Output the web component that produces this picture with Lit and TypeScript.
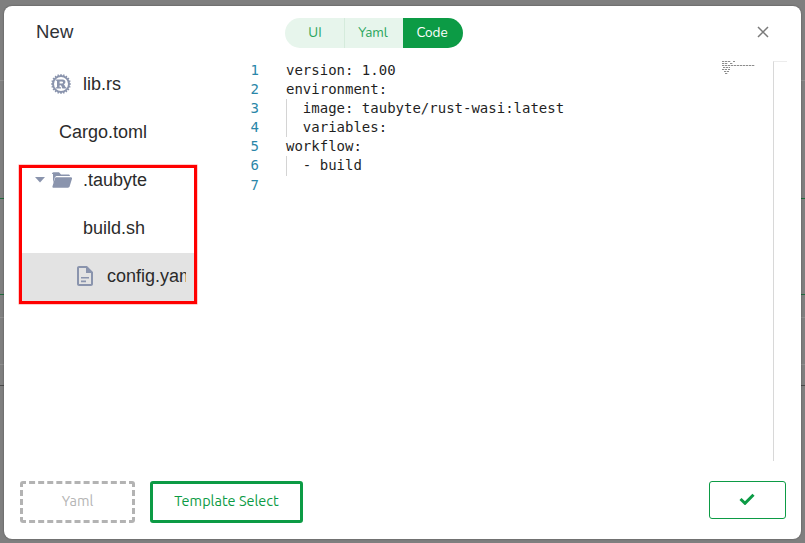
import { LitElement, html, css, svg } from "lit";
import { customElement } from "lit/decorators.js";

const CODE: [string, boolean][] = [
  ["version: 1.00", false],
  ["environment:", false],
  ["  image: taubyte/rust-wasi:latest", true],
  ["  variables:", true],
  ["workflow:", false],
  ["  - build", true],
  ["", false],
];

const BACKDROP: [number, string][] = [
  [80, "#8e8e8e"],
  [198, "#1f6b3c"],
  [294, "#1f6b3c"],
  [317, "#8e8e8e"],
  [364, "#8e8e8e"],
  [385, "#4a4a4a"],
];

@customElement("app-root")
export class AppRoot extends LitElement {
  static styles = css`
    :host { display: block; width: 805px; height: 543px; }
    * { box-sizing: border-box; }
    .page { position: relative; width: 805px; height: 543px; background: #7f7f7f; overflow: hidden; padding: 6px 4px 4px; }
    .backline { position: absolute; left: 0; right: 0; height: 1px; }
    .modal { position: relative; width: 797px; height: 533px; background: #fff; border-radius: 8px; display: flex; flex-direction: column; box-shadow: 0 0 2px rgba(0,0,0,.4); }
    .header { height: 47px; display: grid; grid-template-columns: 249px auto 1fr; align-items: center; padding: 7px 32px 0; flex: none; }
    .title { font: 18.5px "Liberation Sans", sans-serif; color: #2f3237; margin-bottom: 2px; letter-spacing: .15px; }
    .seg { display: flex; height: 30px; border-radius: 15px; overflow: hidden; font: 13.5px "Nunito", "Open Sans", sans-serif; }
    .seg span { display: flex; align-items: center; justify-content: center; background: #e7f5ec; color: #2ba55c; padding-bottom: 2px; }
    .seg .ui { width: 60px; border-right: 1px solid #d5ebdc; padding-left: 1px; }
    .seg .yaml { width: 58px; padding-right: 2px; }
    .seg .code { width: 60px; background: #0c9b45; color: #fff; padding-right: 2px; }
    .close { justify-self: end; display: flex; margin-bottom: 2px; }
    .body { flex: 1; display: flex; min-height: 0; }
    .tree { width: 193px; padding: 7px 0 0 16px; flex: none; font: 18px "Liberation Sans", sans-serif; color: #2b2b2b; }
    .row { height: 48px; display: flex; align-items: center; white-space: nowrap; overflow: hidden; }
    .row.tall { height: 49px; padding-bottom: 1px; }
    .row.sel { background: #e3e3e3; width: 174px; padding-right: 8px; padding-bottom: 2px; }
    .name { overflow: hidden; min-width: 0; }
    .l1 { padding-left: 31px; }
    .l2 { padding-left: 39px; }
    .l3 { padding-left: 15px; }
    .l4 { padding-left: 63px; }
    .l5 { padding-left: 57px; }
    .ico { display: flex; flex: none; margin-right: 12px; }
    .caret { margin-right: 7px; flex: none; }
    .folder { margin-right: 11px; flex: none; }
    .doc { margin-right: 14px; flex: none; }
    .redbox { position: absolute; left: 15px; top: 159px; width: 178px; height: 139px; border: 3px solid #f00; box-shadow: 0 0 0 .5px rgba(255,0,0,.4); pointer-events: none; }
    .editor { flex: 1; position: relative; font: 14px/19.1px "DejaVu Sans Mono", monospace; color: #1f1f1f; padding-top: 8px; padding-left: 32px; }
    .line { display: flex; height: 19.1px; }
    .num { width: 30px; text-align: right; color: #2a86a8; margin-right: 27px; flex: none; }
    .txt { white-space: pre; position: relative; }
    .guide { position: absolute; left: 0; top: 0; bottom: 0; width: 1px; background: #d4d4d4; }
    .mini { position: absolute; left: 525px; top: 8px; }
    .track { position: absolute; left: 576px; top: 8px; bottom: 0; width: 14px; border-left: 1px solid #d8d8d8; border-top: 1px solid #ececec; }
    .footer { height: 78px; flex: none; display: flex; align-items: flex-start; padding: 20px 16px 0 16px; gap: 15px; }
    .btn { height: 42px; display: flex; align-items: center; justify-content: center; background: #fff; border-radius: 3px; padding-bottom: 4px; font: 14.5px "Ubuntu", "Noto Sans", sans-serif; }
    .ghost { width: 115px; border: 3px dashed #b3b3b3; color: #b5b5b5; }
    .tpl { width: 153px; border: 3px solid #0c9b45; color: #0c9b45; }
    .ok { width: 77px; height: 38px; border: 1px solid #0c9b45; margin-left: auto; margin-right: -1px; padding: 0 2px 3px 0; }
  `;

  rust() {
    const teeth = Array.from({ length: 20 }, (_, i) => svg`<rect x="9.3" y=".1" width="1.4" height="2" fill="#8a94ad" transform="rotate(${i * 18} 10 10)"></rect>`);
    return html`<svg width="20" height="20" viewBox="0 0 20 20">${teeth}
      <circle cx="10" cy="10" r="8" fill="none" stroke="#8a94ad" stroke-width="2"></circle>
      <path fill-rule="evenodd" d="M4.8 5.4H11.8C15 5.4 15.2 9.4 12.8 10.2C14 10.6 13.8 13.2 15.4 13.4V14.6H11.6C10.4 14 11.4 11.2 9 11.2H8.6V13.2H10V14.6H4.8V13.2H6V6.8H4.8ZM8.6 7.4V9.4H11C12.4 9.4 12.4 7.4 11 7.4Z" fill="#8a94ad"></path></svg>`;
  }

  render() {
    return html`<div class="page">
      ${BACKDROP.map(([y, c]) => html`<div class="backline" style="top:${y}px;background:${c}"></div>`)}
      <div class="modal">
      <div class="header">
        <div class="title">New</div>
        <div class="seg"><span class="ui">UI</span><span class="yaml">Yaml</span><span class="code">Code</span></div>
        <div class="close"><svg width="12" height="12" viewBox="0 0 12 12"><path d="M1 1L11 11M11 1L1 11" stroke="#7a7a7a" stroke-width="1.5" fill="none"></path></svg></div>
      </div>
      <div class="body">
        <div class="tree">
          <div class="row l1"><span class="ico">${this.rust()}</span>lib.rs</div>
          <div class="row l2">Cargo.toml</div>
          <div class="row l3">
            <svg class="caret" width="10" height="6" viewBox="0 0 10 6"><path d="M0 0H10L5 5.5Z" fill="#8a94ad"></path></svg>
            <svg class="folder" width="20" height="16" viewBox="0 0 20 16"><path d="M0 2C0 1 .7 .3 1.6 .3H7L9 2.4H16.4C17.3 2.4 18 3 18 4H5.2C4 4 3.2 4.6 2.8 5.6L1 11V2ZM4 5.2H19C19.8 5.2 20.2 6 20 6.7L17.6 14.5C17.4 15.2 16.8 15.7 16 15.7H1.6C.7 15.7 .2 15 .5 14.2L3 6C3.2 5.5 3.5 5.2 4 5.2Z" fill="#8a94ad"></path></svg>
            <span>.taubyte</span></div>
          <div class="row tall l4">build.sh</div>
          <div class="row sel l5">
            <svg class="doc" width="16" height="20" viewBox="0 0 16 20"><path fill-rule="evenodd" d="M2 0H10L16 6V18C16 19.1 15.1 20 14 20H2C.9 20 0 19.1 0 18V2C0 .9 .9 0 2 0ZM2 2V18H14V7H9V2ZM4 11H12V12.6H4ZM4 14.6H9V16.2H4Z" fill="#8a94ad"></path></svg>
            <span class="name">config.yaml</span></div>
        </div>
        <div class="editor">
          ${CODE.map(([t, g], i) => html`<div class="line"><span class="num">${i + 1}</span><span class="txt">${g ? html`<i class="guide"></i>` : ""}${t}</span></div>`)}
          <svg class="mini" width="34" height="13" viewBox="0 0 34 13"><path d="M0 .5H9M11 .5H13M0 2.5H6M8 2.5H11M0 4.5H33M1 6.5H8M0 8.5H5M6 8.5H8M2 10.5H7M3 12.5H6" stroke="#8d8d8d" stroke-width="1" stroke-dasharray="2.3 .7" fill="none"></path></svg>
          <div class="track"></div>
        </div>
      </div>
      <div class="footer">
        <div class="btn ghost">Yaml</div>
        <div class="btn tpl">Template Select</div>
        <div class="btn ok"><svg width="16" height="12" viewBox="0 0 16 12"><path d="M1.5 6L6 10.3L14.5 1.7" fill="none" stroke="#0c9b45" stroke-width="3"></path></svg></div>
      </div>
      <div class="redbox"></div>
    </div></div>`;
  }
}
